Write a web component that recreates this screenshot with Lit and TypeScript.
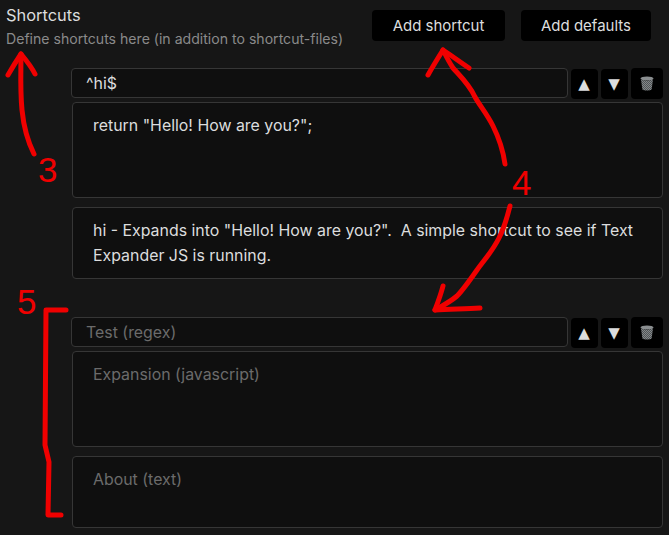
import { LitElement, html, css, svg } from "lit";
import { customElement } from "lit/decorators.js";

const trash = html`<svg class="trash" width="14" height="15" viewBox="0 0 14 15" aria-hidden="true">
  <defs><pattern id="dith" width="2" height="2" patternUnits="userSpaceOnUse">
    <rect width="2" height="2" fill="#84888a"/><rect width="1" height="1" fill="#505456"/><rect x="1" y="1" width="1" height="1" fill="#505456"/>
  </pattern></defs>
  <ellipse cx="7" cy="2.5" rx="6.5" ry="2" fill="#8a8e90"/>
  <path d="M1 3.6 C4 5 10 5 13 3.6 L11.6 13.4 C10 14.8 4 14.8 2.4 13.4 Z" fill="url(#dith)"/>
</svg>`;

@customElement("app-root")
export class AppRoot extends LitElement {
  static styles = css`
    :host {
      display: block;
      position: relative;
      width: 669px;
      height: 535px;
      overflow: hidden;
      background: #161616;
      font-family: Inter, "Liberation Sans", sans-serif;
      color: #dcddde;
    }
    .header {
      display: flex;
      justify-content: space-between;
      align-items: flex-start;
      padding: 10px 18px 0 6px;
      height: 58px;
      box-sizing: border-box;
    }
    .title { font-size: 16.4px; line-height: 19px; margin-top: -4px; color: #dcddde; }
    .desc { font-size: 14.1px; line-height: 18px; margin-top: 5px; color: #8a8a8a; }
    .actions { display: flex; gap: 16px; }
    .actions button {
      height: 31px;
      border: 0;
      border-radius: 4px;
      background: #000;
      color: #dcddde;
      font: 400 15px Inter, "Liberation Sans", sans-serif;
      padding: 0;
    }
    .add { width: 133px; }
    .defaults { width: 130px; }
    .list { padding: 10px 6px 0 71px; }
    .shortcut { display: flex; flex-direction: column; margin-bottom: 38px; }
    .row { display: flex; align-items: flex-start; }
    input, textarea {
      box-sizing: border-box;
      background: #0f0f0f;
      border: 1px solid #363636;
      border-radius: 4px;
      color: #dcddde;
      font: 400 15.9px/25px Inter, "Liberation Sans", sans-serif;
      outline: none;
      margin: 0;
      display: block;
    }
    input::placeholder, textarea::placeholder { color: #6b6b6b; opacity: 1; }
    input { width: 497px; height: 30px; padding: 0 14px; }
    textarea { width: 591px; margin-left: 1px; padding: 10px 20px; resize: none; overflow: hidden; }
    .code { height: 96px; margin-top: 3px; }
    .about { height: 72px; margin-top: 9px; }
    .tools { display: flex; gap: 3px; margin-left: 3px; align-items: flex-start; }
    .tools button {
      box-sizing: border-box;
      width: 27px;
      height: 30px;
      margin-top: 1px;
      padding: 0 1px 0 0;
      border: 0;
      border-radius: 4px;
      background: #000;
      color: #dcddde;
      font: 400 15px "DejaVu Sans", sans-serif;
      display: flex;
      align-items: center;
      justify-content: center;
    }
    .tools button.del { width: 32px; height: 31px; margin-top: 0; padding: 0; }
    .ink { position: absolute; inset: 0; width: 669px; height: 535px; pointer-events: none; }
    .ink path { fill: none; stroke: #f00000; stroke-width: 5; stroke-linecap: round; stroke-linejoin: round; }
    .digit {
      position: absolute;
      color: #f00000;
      font: 400 35px/35px "Liberation Sans", sans-serif;
    }
    .d3 { left: 38px; top: 152px; }
    .d4 { left: 512px; top: 165px; }
    .d5 { left: 17px; top: 284px; }
  `;

  private shortcut(test: string, code: string, about: string) {
    return html`<div class="shortcut">
      <div class="row">
        <input placeholder="Test (regex)" .value=${test} />
        <div class="tools">
          <button>▲</button>
          <button>▼</button>
          <button class="del">${trash}</button>
        </div>
      </div>
      <textarea class="code" placeholder="Expansion (javascript)" .value=${code}></textarea>
      <textarea class="about" placeholder="About (text)" .value=${about}></textarea>
    </div>`;
  }

  render() {
    return html`
      <div class="header">
        <div>
          <div class="title">Shortcuts</div>
          <div class="desc">Define shortcuts here (in addition to shortcut-files)</div>
        </div>
        <div class="actions">
          <button class="add">Add shortcut</button>
          <button class="defaults">Add defaults</button>
        </div>
      </div>
      <div class="list">
        ${this.shortcut("^hi$", 'return "Hello! How are you?";', 'hi - Expands into "Hello! How are you?".  A simple shortcut to see if Text Expander JS is running.')}
        ${this.shortcut("", "", "")}
      </div>
      <svg class="ink" viewBox="0 0 669 535" aria-hidden="true">
        ${svg`
          <path d="M34 154 C28 142 24 130 22 110 C20 90 21 70 21 54"/>
          <path d="M8 75 C12 68 17 60 21 54 C26 60 31 66 35 74"/>
          <path d="M505 164 C503 150 499 138 493 126 C487 114 480 106 475 97 C469 84 460 76 453 68 C449 62 446 56 443 50"/>
          <path d="M428 75 C433 66 438 58 443 50 C452 56 460 62 469 68"/>
          <path d="M510 206 C507 218 504 228 499 238 C492 252 484 260 477 270 C470 280 463 290 457 296 C450 302 442 306 435 310"/>
          <path d="M443 286 C441 294 438 302 435 310 C450 309 465 309 480 308"/>
          <path d="M66 310 L46 310 L45 445 L49 462 L48 515 L61 515"/>
        `}
      </svg>
      <span class="digit d3">3</span>
      <span class="digit d4">4</span>
      <span class="digit d5">5</span>
    `;
  }
}
